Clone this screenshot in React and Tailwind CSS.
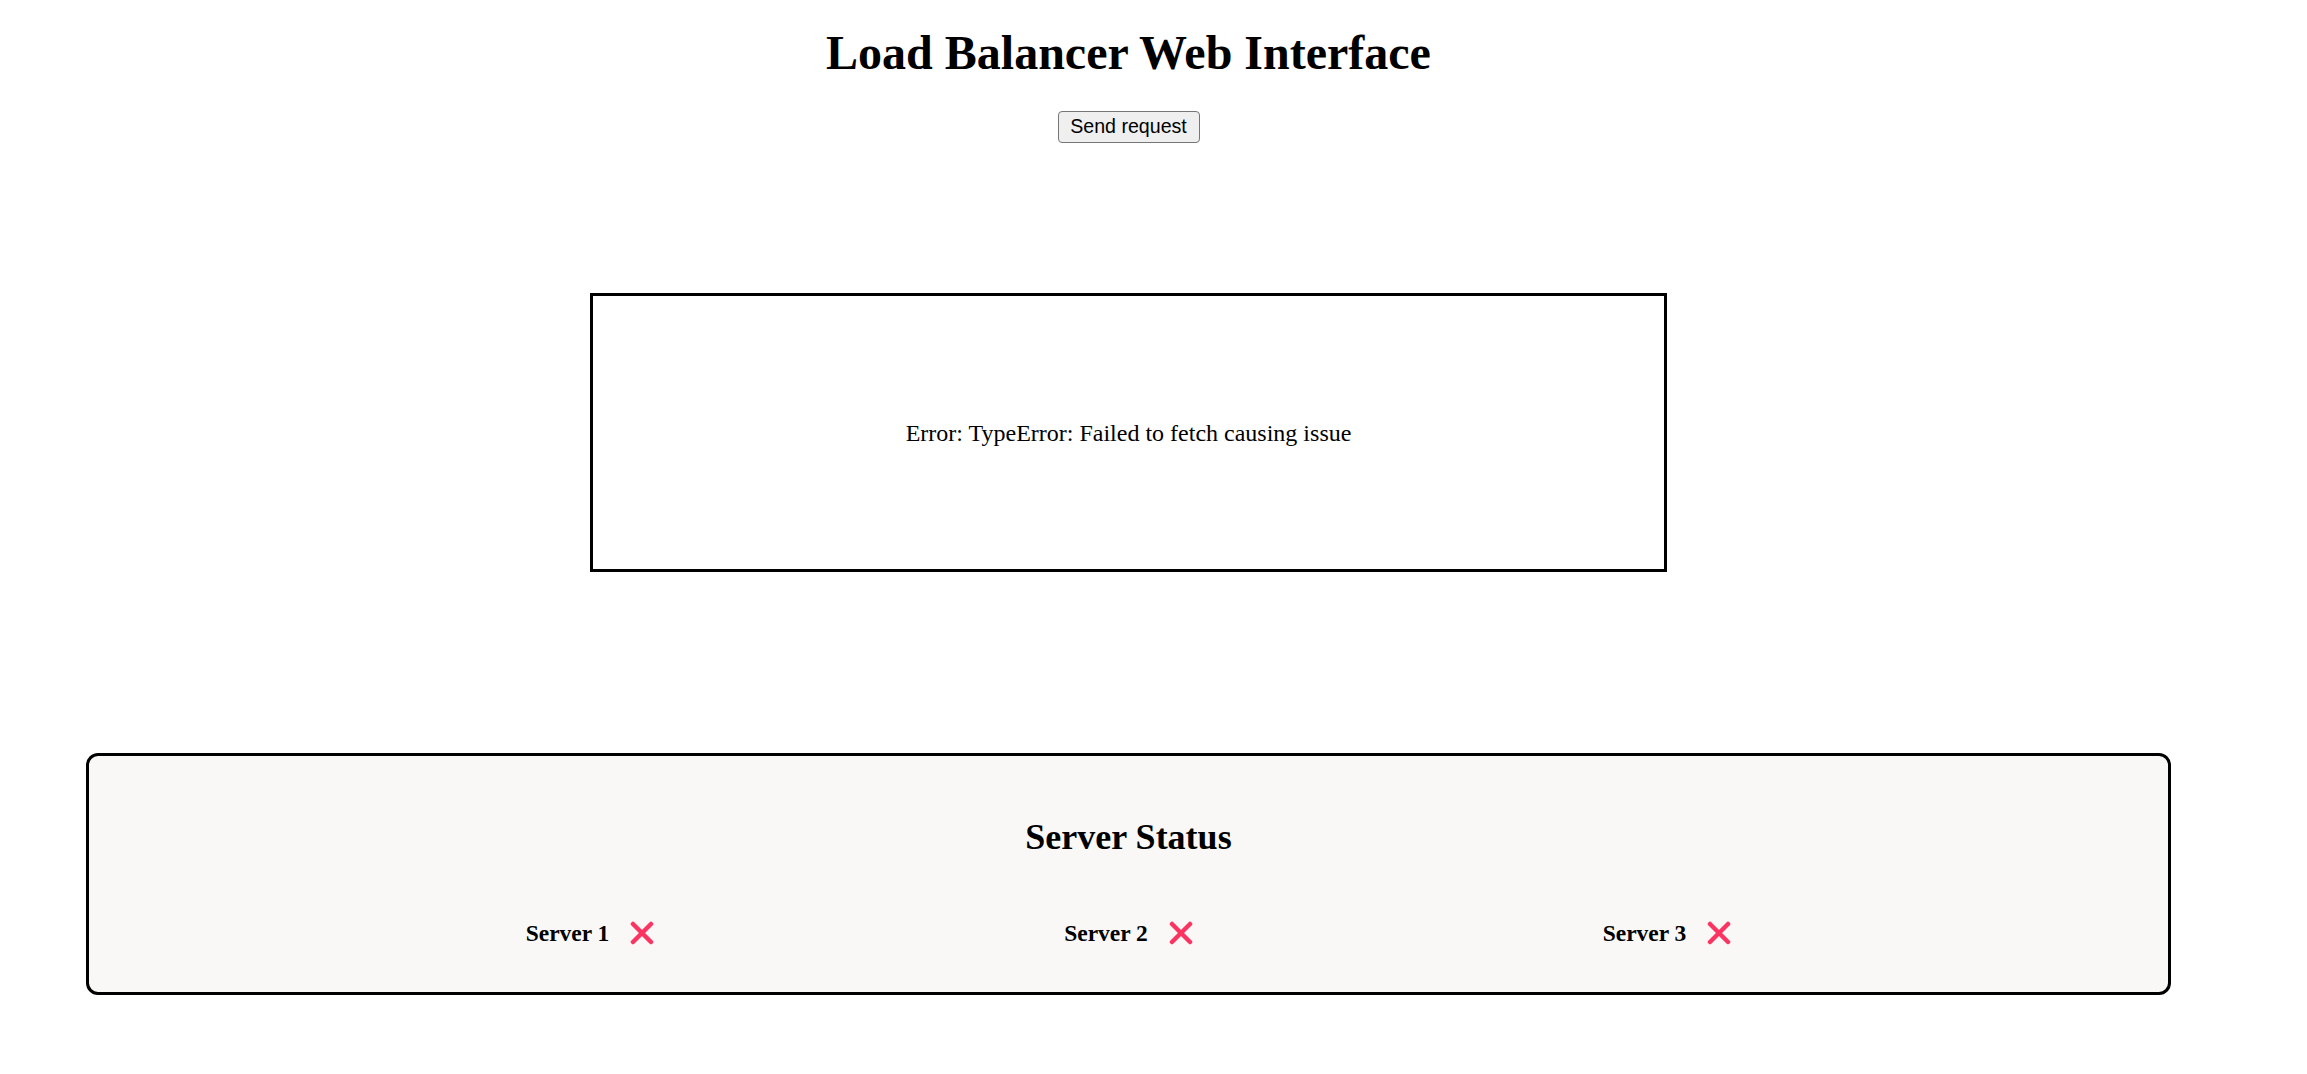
import React from 'react';

const servers = ['Server 1', 'Server 2', 'Server 3'];

// Failed server indicator
const CrossIcon = () => (
  <svg width="24" height="24" viewBox="0 0 24 24" fill="none" stroke="#fb3462" strokeWidth="4.5" strokeLinecap="round">
    <line x1="3" y1="3" x2="21" y2="21" />
    <line x1="21" y1="3" x2="3" y2="21" />
  </svg>
);

const App = () => {
  return (
    <div className="w-[2257px] min-h-screen bg-white text-black text-center font-['Liberation_Serif',serif]">
      <h1 className="mt-[27px] text-[48px] leading-[52px] font-bold">Load Balancer Web Interface</h1>

      <div className="mt-[32px] flex justify-center">
        <button className="w-[142px] h-[32px] flex items-center justify-center bg-[#efefef] border-[1.5px] border-[#767676] rounded-[4px] font-['Liberation_Sans',Arial,sans-serif] text-[19.6px] leading-none text-black">
          Send request
        </button>
      </div>

      <div className="mt-[150px] mx-auto w-[1077px] h-[279px] border-[3px] border-black flex items-center justify-center text-[24px] leading-[26px]">
        Error: TypeError: Failed to fetch causing issue
      </div>

      <div className="mt-[181px] mx-[86px] border-[3px] border-black rounded-[12px] bg-[#f9f8f7] pt-[62px] pb-[46px]">
        <h2 className="text-[36px] leading-[39px] font-bold">Server Status</h2>
        <div className="mt-[63px] grid grid-cols-[repeat(3,538.5px)] justify-center">
          {servers.map((name) => (
            <div key={name} className="flex items-center justify-center gap-[21px] h-[26px]">
              <span className="text-[23.5px] leading-[26px] font-bold">{name}</span>
              <CrossIcon />
            </div>
          ))}
        </div>
      </div>
    </div>
  );
};

export default App;
